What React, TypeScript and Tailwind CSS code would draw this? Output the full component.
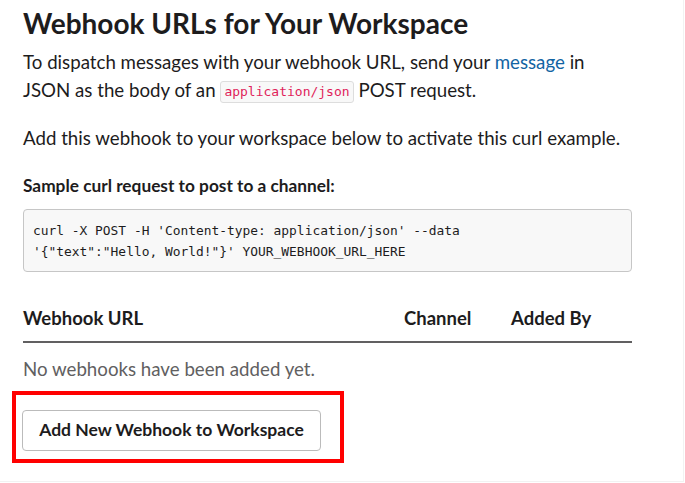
export default function App() {
  return (
    <main
      className="h-[482px] w-[684px] border-r border-b border-[#f2f2f2] bg-white text-[#1d1c1d]"
      style={{ fontFamily: "Lato, 'Noto Sans', sans-serif" }}
    >
      <section className="w-[632px] pl-[23px] pt-[3px]">
        <h1 className="text-[28px] font-bold leading-[40px]">
          Webhook URLs for Your Workspace
        </h1>

        <p className="mt-[5px] text-[18.7px] leading-[28px]">
          To dispatch messages with your webhook URL, send your{" "}
          <a href="#" className="text-[#1264a3]">
            message
          </a>{" "}
          in JSON as the body of an{" "}
          <code
            className="inline-block rounded-[3px] border border-[#dddddd] bg-[#f8f8f8] px-[3px] py-px align-[1px] text-[13px] leading-[18px] text-[#e01e5a]"
            style={{ fontFamily: "'DejaVu Sans Mono', monospace" }}
          >
            application/json
          </code>{" "}
          POST request.
        </p>

        <p className="mt-[20px] text-[18.7px] leading-[28px]">
          Add this webhook to your workspace below to activate this curl example.
        </p>

        <h2 className="mt-[22px] text-[17.3px] font-bold leading-[24px]">
          Sample curl request to post to a channel:
        </h2>

        <pre
          className="mt-[11px] h-[63px] rounded-[4px] border border-[#c6c6c6] bg-[#f8f8f8] px-[9px] pt-[10px] text-[12.9px] leading-[21px] text-[#1d1c1d]"
          style={{ fontFamily: "'DejaVu Sans Mono', monospace" }}
        >
          {`curl -X POST -H 'Content-type: application/json' --data\n'{"text":"Hello, World!"}' YOUR_WEBHOOK_URL_HERE`}
        </pre>

        <div className="mt-[34px] grid grid-cols-[381px_107px_121px] border-b-2 border-[#616061] pb-[11px] text-[18.5px] font-bold leading-[24px]">
          <div>Webhook URL</div>
          <div>Channel</div>
          <div>Added By</div>
        </div>

        <p className="mt-[12px] text-[18.7px] leading-[28px] text-[#616061]">
          No webhooks have been added yet.
        </p>

        <div className="relative mt-[27px] w-fit">
          <button className="-ml-px h-[41px] w-[299px] rounded-[4px] border border-[#bbbbbb] bg-white text-[17.5px] font-bold text-[#1d1c1d]">
            Add New Webhook to Workspace
          </button>
          <div className="pointer-events-none absolute -top-[19px] -left-[11px] h-[72px] w-[332px] border-4 border-[#ff0000]" />
        </div>
      </section>
    </main>
  );
}
